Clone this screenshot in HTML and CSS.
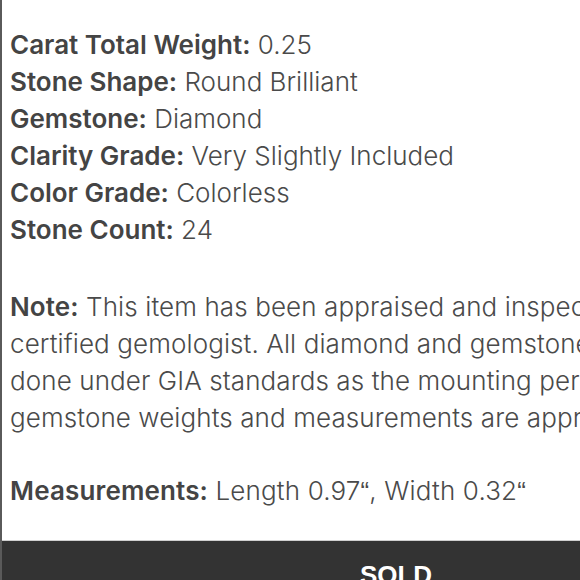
FILE: index.html
```html
<!DOCTYPE html>
<html>
<head>
<meta charset="utf-8">
<link rel="stylesheet" href="styles.css">
</head>
<body>
<div class="page">
  <div class="details">
    <ul class="specs">
      <li><span class="label">Carat Total Weight:</span> 0.25</li>
      <li><span class="label">Stone Shape:</span> Round Brilliant</li>
      <li><span class="label">Gemstone:</span> Diamond</li>
      <li><span class="label">Clarity Grade:</span> Very Slightly Included</li>
      <li><span class="label">Color Grade:</span> Colorless</li>
      <li><span class="label">Stone Count:</span> 24</li>
    </ul>
    <p class="note"><span class="label">Note:</span> This item has been appraised and inspected by a<br>certified gemologist. All diamond and gemstone grading was<br>done under GIA standards as the mounting permits, and all diamond and<br>gemstone weights and measurements are approximate.</p>
    <p class="measure"><span class="label">Measurements:</span> Length 0.97<span class="q">“</span>, Width 0.32<span class="q">“</span></p>
  </div>
  <div class="sold-bar"><span class="sold">SOLD</span></div>
</div>
</body>
</html>
```
FILE: styles.css
```css
html, body {
  margin: 0;
  padding: 0;
  background: #ffffff;
  overflow: hidden;
}
.page {
  width: 790px;
  height: 580px;
  display: flex;
  flex-direction: column;
  border-left: 2px solid #5a5a5a;
  box-sizing: border-box;
}
.details {
  padding: 26px 0 0 8px;
  height: 541px;
  flex: none;
  box-sizing: border-box;
  font-family: Inter, "Liberation Sans", sans-serif;
  font-size: 26px;
  line-height: 37px;
  font-weight: 300;
  color: #4a4a4a;
  border-bottom: 1px solid #cfcfcf;
}
.specs {
  list-style: none;
  margin: 0;
  padding: 0;
}
.label {
  font-weight: 600;
  color: #444444;
}
.note {
  margin: 40px 0 0 0;
  white-space: nowrap;
  letter-spacing: 0.1px;
}
.measure {
  margin: 36px 0 0 0;
  white-space: nowrap;
  letter-spacing: 0.15px;
}
.q {
  font-family: "Liberation Sans", Arial, sans-serif;
  font-weight: 400;
}
.sold-bar {
  flex: 1;
  background: #333333;
  display: flex;
  justify-content: center;
  padding-top: 18px;
}
.sold {
  font-family: "Liberation Sans", Arial, sans-serif;
  font-weight: 700;
  font-size: 26px;
  color: #ffffff;
  line-height: 32px;
}
```
